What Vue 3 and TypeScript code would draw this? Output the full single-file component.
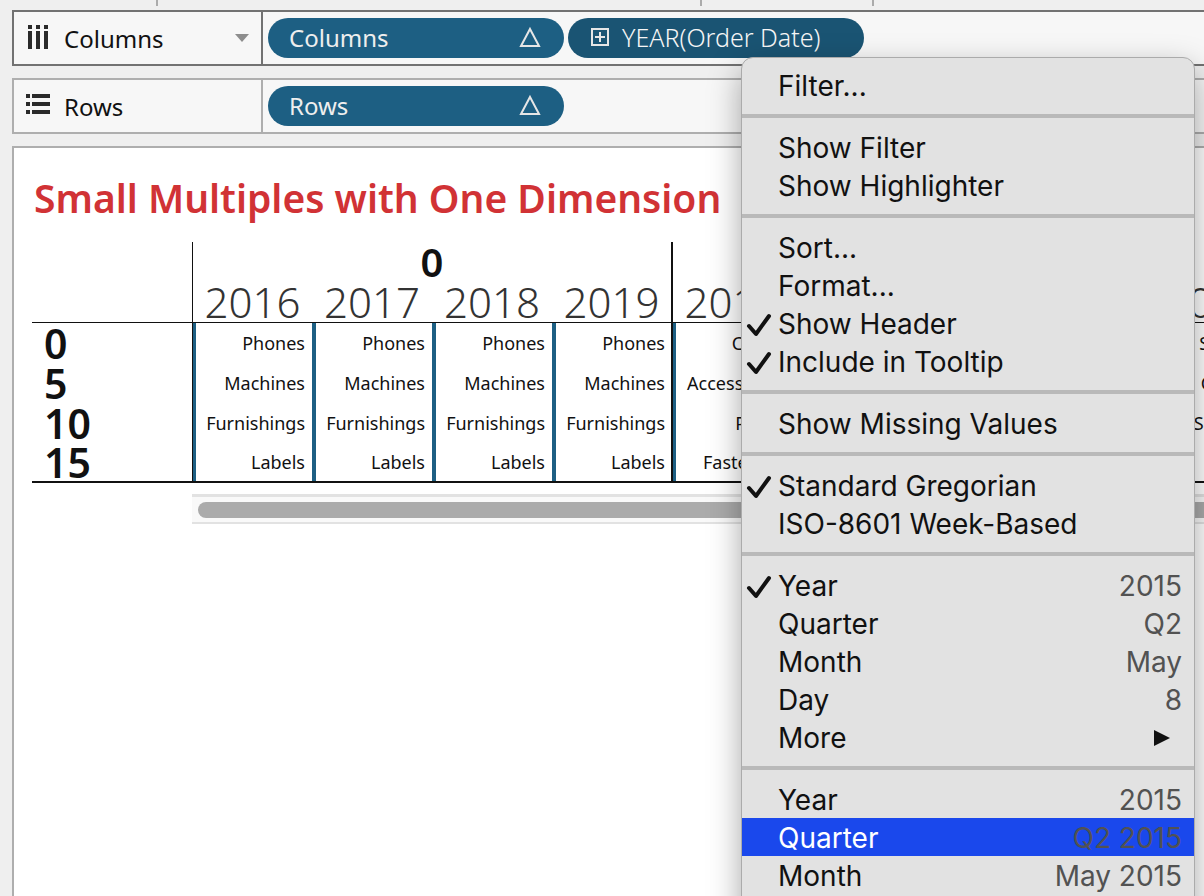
<script setup lang="ts">
interface MenuItem {
  label: string
  hint?: string
  checked?: boolean
  submenu?: boolean
  active?: boolean
}

const menu: MenuItem[][] = [
  [{ label: 'Filter...' }],
  [{ label: 'Show Filter' }, { label: 'Show Highlighter' }],
  [
    { label: 'Sort...' },
    { label: 'Format...' },
    { label: 'Show Header', checked: true },
    { label: 'Include in Tooltip', checked: true },
  ],
  [{ label: 'Show Missing Values' }],
  [{ label: 'Standard Gregorian', checked: true }, { label: 'ISO-8601 Week-Based' }],
  [
    { label: 'Year', hint: '2015', checked: true },
    { label: 'Quarter', hint: 'Q2' },
    { label: 'Month', hint: 'May' },
    { label: 'Day', hint: '8' },
    { label: 'More', submenu: true },
  ],
  [
    { label: 'Year', hint: '2015' },
    { label: 'Quarter', hint: 'Q2 2015', active: true },
    { label: 'Month', hint: 'May 2015' },
  ],
]

const years = ['2016', '2017', '2018', '2019']
const groups = ['0', '1', '2']
const rows = [
  { head: '0', cells: ['Phones', 'Chairs', 'Storage'] },
  { head: '5', cells: ['Machines', 'Accessories', 'Copiers'] },
  { head: '10', cells: ['Furnishings', 'Paper', 'Supplies'] },
  { head: '15', cells: ['Labels', 'Fasteners', ''] },
]
</script>

<template>
  <div class="page">
    <div class="ticks"><i></i><i></i><i></i></div>

    <section class="shelf dark">
      <button class="shelf-name" type="button">
        <svg class="shelf-icon" width="26" height="26" viewBox="0 0 26 26">
          <path d="M4 0h4v4H4zM12 0h4v4h-4zM20 0h4v4h-4zM4 6h4v18H4zM12 6h4v18h-4zM20 6h4v18h-4z" fill="#2a2a2a" />
        </svg>
        <span>Columns</span>
        <svg class="caret" width="14" height="8" viewBox="0 0 14 8"><path d="M0 0h14L7 8z" fill="#8d8d8d" /></svg>
      </button>
      <div class="pills">
        <button class="pill" type="button">
          <span>Columns</span>
          <svg width="24" height="22" viewBox="0 0 24 22"><path d="M12 3L21 20H3z" fill="none" stroke="#e6e6e6" stroke-width="2" /></svg>
        </button>
        <button class="pill pressed" type="button">
          <svg width="20" height="20" viewBox="0 0 20 20">
            <path d="M2 2h16v16H2zM5 10h10M10 5v10" fill="none" stroke="#e6e6e6" stroke-width="2" />
          </svg>
          <span>YEAR(Order Date)</span>
        </button>
      </div>
    </section>

    <section class="shelf">
      <button class="shelf-name" type="button">
        <svg class="shelf-icon" width="26" height="26" viewBox="0 0 26 26">
          <path d="M2 1h4v4H2zM8 1h18v4H8zM2 9h4v4H2zM8 9h18v4H8zM2 17h4v4H2zM8 17h18v4H8z" fill="#2a2a2a" />
        </svg>
        <span>Rows</span>
      </button>
      <div class="pills">
        <button class="pill" type="button">
          <span>Rows</span>
          <svg width="24" height="22" viewBox="0 0 24 22"><path d="M12 3L21 20H3z" fill="none" stroke="#e6e6e6" stroke-width="2" /></svg>
        </button>
      </div>
    </section>

    <main class="sheet">
      <h1>Small Multiples with One Dimension</h1>
      <table>
        <thead>
          <tr class="group-row">
            <td class="corner"></td>
            <th v-for="g in groups" :key="g" colspan="4" class="group last">{{ g }}</th>
          </tr>
          <tr class="year-row">
            <td class="corner"></td>
            <template v-for="g in groups" :key="g">
              <th v-for="(y, yi) in years" :key="y" :class="{ first: yi === 0, last: yi === 3 }">{{ y }}</th>
            </template>
          </tr>
        </thead>
        <tbody>
          <tr v-for="r in rows" :key="r.head">
            <th scope="row">{{ r.head }}</th>
            <template v-for="(c, ci) in r.cells" :key="ci">
              <td v-for="(y, yi) in years" :key="y" :class="{ first: yi === 0, last: yi === 3 }">{{ c }}</td>
            </template>
          </tr>
        </tbody>
      </table>
      <div class="scrollbar"><div class="thumb"></div></div>
    </main>

    <div class="menu" role="menu">
      <div v-for="(section, si) in menu" :key="si" class="section">
        <button
          v-for="item in section"
          :key="item.label"
          class="item"
          :class="{ active: item.active }"
          type="button"
          role="menuitem"
        >
          <span class="mark">
            <svg v-if="item.checked" width="26" height="26" viewBox="0 0 26 26">
              <path d="M3 15L10 23L23 5" fill="none" stroke="#111" stroke-width="4" stroke-linecap="round" stroke-linejoin="round" />
            </svg>
          </span>
          <span class="label">{{ item.label }}</span>
          <span v-if="item.hint" class="hint">{{ item.hint }}</span>
          <svg v-if="item.submenu" class="arrow" width="16" height="16" viewBox="0 0 16 16"><path d="M0 0L16 8L0 16z" fill="#111" /></svg>
        </button>
      </div>
    </div>
  </div>
</template>

<style>
body {
  margin: 0;
}
</style>

<style scoped>
* {
  box-sizing: border-box;
}
.page {
  position: relative;
  display: flex;
  flex-direction: column;
  height: 100vh;
  overflow: hidden;
  padding-left: 12px;
  background: #efefef;
  color: #111;
  font-family: 'Noto Sans', 'Liberation Sans', sans-serif;
}
button {
  margin: 0;
  padding: 0;
  border: 0;
  background: none;
  color: inherit;
  font: inherit;
  text-align: left;
}
svg {
  display: block;
  flex: none;
}
.ticks {
  display: flex;
  flex: none;
  height: 10px;
}
.ticks i {
  width: 2px;
  height: 6px;
  background: #ababab;
}
.ticks i:nth-child(1) {
  margin-left: 144px;
}
.ticks i:nth-child(2) {
  margin-left: 542px;
}
.ticks i:nth-child(3) {
  margin-left: 170px;
}
.shelf {
  display: flex;
  flex: none;
  height: 56px;
  margin-bottom: 12px;
  border: 2px solid #aeaeae;
  border-right: 0;
  background: #f7f7f7;
}
.shelf.dark {
  border-color: #727272;
}
.shelf-name {
  display: flex;
  align-items: center;
  gap: 14px;
  width: 249px;
  padding: 0 12px 0 10px;
  border-right: 2px solid #aeaeae;
  font-size: 24px;
}
.dark .shelf-name {
  border-color: #727272;
}
.caret {
  margin-left: auto;
}
.pills {
  display: flex;
  flex: 1;
  gap: 4px;
  padding: 6px 5px;
}
.pill {
  display: flex;
  align-items: center;
  justify-content: space-between;
  width: 296px;
  height: 40px;
  padding: 0 22px 2px 21px;
  border-radius: 20px;
  background: #1d5f83;
  color: #eee;
  font-size: 24px;
}
.pill.pressed {
  justify-content: flex-start;
  gap: 12px;
  padding-left: 22px;
  background: #1a5473;
  color: #f6f6f6;
  font-size: 25px;
  font-weight: 300;
}
.sheet {
  flex: 1;
  min-height: 0;
  border: 2px solid #aeaeae;
  border-width: 2px 0 0 2px;
  background: #fff;
  overflow: hidden;
}
h1 {
  margin: 0;
  padding: 20px 20px 14px;
  color: #d13235;
  font-size: 39px;
  font-weight: 600;
  line-height: 60px;
  white-space: nowrap;
}
table {
  width: 1600px;
  margin-left: 18px;
  table-layout: fixed;
  border-collapse: separate;
  border-spacing: 0;
  border-bottom: 2px solid #111;
}
th,
td {
  height: 40px;
  padding: 0;
  white-space: nowrap;
}
.corner {
  width: 160px;
}
.group {
  border-left: 1px solid #111;
  font-size: 40px;
  font-weight: 600;
  line-height: 40px;
}
.year-row th,
.year-row td {
  height: 41px;
  border-bottom: 1px solid #111;
  color: #333;
  font-size: 42px;
  font-weight: 300;
  line-height: 40px;
}
.year-row .first {
  border-left: 1px solid #111;
}
tbody th {
  padding-left: 12px;
  font-size: 41px;
  font-weight: 600;
  line-height: 40px;
  text-align: left;
}
tbody td {
  padding-right: 7px;
  border-left: 4px solid #1d5f83;
  font-size: 18px;
  text-align: right;
}
tbody .first {
  border-left: 1px solid #111;
  box-shadow: inset 3px 0 #1d5f83;
}
table .last {
  border-right: 1px solid #111;
}
tbody .last {
  padding-right: 6px;
}
tbody tr:last-child > * {
  height: 38px;
  line-height: 38px;
}
.scrollbar {
  height: 30px;
  margin: 11px 0 0 178px;
  padding: 5px 0 0 6px;
  border-top: 3px solid #e2e2e2;
  border-bottom: 2px solid #e2e2e2;
  background: #f9f9f9;
}
.thumb {
  width: 1100px;
  height: 16px;
  border-radius: 8px;
  background: #ababab;
}
.menu {
  position: absolute;
  top: 57px;
  left: 741px;
  width: 454px;
  padding-bottom: 20px;
  border: 1px solid #ababab;
  border-radius: 12px;
  background: #e2e2e2;
  box-shadow: 0 12px 32px rgba(0, 0, 0, 0.35);
  font-family: Inter, 'Liberation Sans', sans-serif;
  font-size: 28px;
}
.section {
  padding: 10px 0;
  border-top: 4px solid #b9b9b9;
}
.section:first-child {
  padding-top: 8px;
  border-top: 0;
}
.item {
  display: flex;
  align-items: center;
  width: 100%;
  height: 38px;
  padding: 2px 12px 0 4px;
}
.item.active {
  background: #1a48ec;
  color: #fff;
}
.mark {
  width: 32px;
}
.hint {
  margin-left: auto;
  color: #525252;
}
.arrow {
  margin: 0 12px 0 auto;
}
</style>
